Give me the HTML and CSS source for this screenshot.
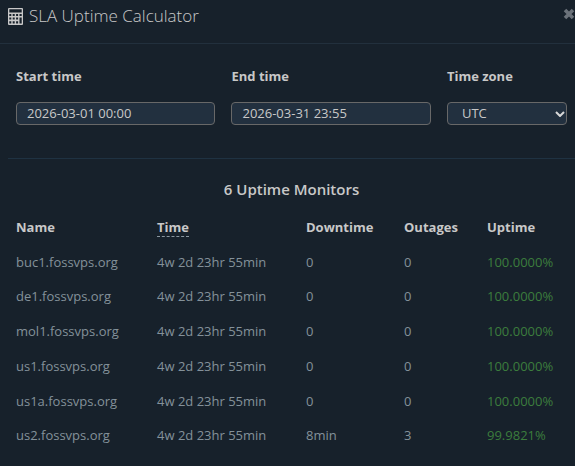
FILE: index.html
```html
<!DOCTYPE html>
<html lang="en">
<head>
<meta charset="utf-8">
<title>SLA Uptime Calculator</title>
<link rel="stylesheet" href="styles.css">
</head>
<body>
<main class="dialog">
  <header class="dialog-header">
    <svg class="calc-icon" viewBox="0 0 15 17" aria-hidden="true">
      <path fill="currentColor" fill-rule="evenodd" d="M1 0h13q1 0 1 1v15q0 1-1 1H1q-1 0-1-1V1q0-1 1-1zM1.3 1.3v3.2h12.4V1.3zM1.3 6v2h2V6zM4.7 6v2h2V6zM8.1 6v2h2V6zM11.5 6v2h2.2V6zM1.3 9.5v2h2v-2zM4.7 9.5v2h2v-2zM8.1 9.5v2h2v-2zM11.5 9.5v6h2.2v-6zM1.3 13.2v2.4h2v-2.4zM4.7 13.2v2.4h2v-2.4zM8.1 13.2v2.4h2v-2.4z"/>
    </svg>
    <h1 class="title">SLA Uptime Calculator</h1>
    <button class="close" type="button" aria-label="Close">
      <svg class="close-icon" viewBox="0 0 12 12" aria-hidden="true"><path d="M2 2l8 8M10 2l-8 8" stroke="currentColor" stroke-width="3.6"/></svg>
    </button>
  </header>
  <form class="filters">
    <div class="field">
      <label for="start">Start time</label>
      <input id="start" class="control" type="text" value="2026-03-01 00:00">
    </div>
    <div class="field">
      <label for="end">End time</label>
      <input id="end" class="control" type="text" value="2026-03-31 23:55">
    </div>
    <div class="field">
      <label for="zone">Time zone</label>
      <div class="select-wrap">
        <select id="zone" class="control select"><option>UTC</option></select>
        <svg class="chevron" viewBox="0 0 10 6" aria-hidden="true"><path d="M1 1l4 4 4-4" fill="none" stroke="currentColor" stroke-width="2"/></svg>
      </div>
    </div>
  </form>
  <section class="results">
    <h2 class="subtitle">6 Uptime Monitors</h2>
    <table class="monitors">
      <colgroup><col class="c-name"><col class="c-time"><col class="c-down"><col class="c-out"><col class="c-up"></colgroup>
      <thead>
        <tr><th>Name</th><th><span class="hint">Time</span></th><th>Downtime</th><th>Outages</th><th>Uptime</th></tr>
      </thead>
      <tbody>
        <tr><td>buc1.fossvps.org</td><td>4w 2d 23hr 55min</td><td>0</td><td>0</td><td class="good">100.0000%</td></tr>
        <tr><td>de1.fossvps.org</td><td>4w 2d 23hr 55min</td><td>0</td><td>0</td><td class="good">100.0000%</td></tr>
        <tr><td>mol1.fossvps.org</td><td>4w 2d 23hr 55min</td><td>0</td><td>0</td><td class="good">100.0000%</td></tr>
        <tr><td>us1.fossvps.org</td><td>4w 2d 23hr 55min</td><td>0</td><td>0</td><td class="good">100.0000%</td></tr>
        <tr><td>us1a.fossvps.org</td><td>4w 2d 23hr 55min</td><td>0</td><td>0</td><td class="good">100.0000%</td></tr>
        <tr><td>us2.fossvps.org</td><td>4w 2d 23hr 55min</td><td>8min</td><td>3</td><td class="good">99.9821%</td></tr>
      </tbody>
    </table>
  </section>
</main>
</body>
</html>
```
FILE: styles.css
```css
* { box-sizing: border-box; }
body {
  margin: 0;
  background: #15141f;
  color: #c8c8c8;
  font-family: "Open Sans", sans-serif;
  font-size: 13px;
  line-height: 1.44;
}
.dialog { background: #17212b; padding-bottom: 14px; }
.dialog-header {
  display: flex;
  align-items: flex-start;
  height: 44px;
  padding: 8px 0 0 8px;
  border-bottom: 1px solid #22303d;
}
.calc-icon { width: 15px; height: 17px; flex: none; color: #c8c8c8; }
.title {
  flex: 1;
  margin: 0 0 0 6px;
  font-size: 17px;
  font-weight: 300;
  line-height: 16px;
}
.close {
  flex: none;
  padding: 0;
  border: 0;
  background: none;
  color: #6b727a;
}
.close-icon { display: block; width: 12px; height: 12px; }
.filters {
  display: grid;
  grid-template-columns: 38fr 38fr 24fr;
  margin-left: 8px;
  padding: 20px 0 33px;
  border-bottom: 1px solid #1f3242;
}
.field { min-width: 0; padding: 0 8px; }
.field label {
  display: block;
  margin-bottom: 14px;
  font-weight: 700;
  line-height: 24px;
}
.control {
  display: block;
  width: 100%;
  height: 23px;
  margin: 0;
  padding: 0 10px 2px;
  border: 1px solid #686868;
  border-radius: 4px;
  background: #22303f;
  color: #c8c8c8;
  font: inherit;
  line-height: 19px;
}
.select-wrap { position: relative; }
.select { appearance: none; padding: 0 14px; }
.chevron {
  position: absolute;
  right: 2px;
  top: 9px;
  width: 10px;
  height: 6px;
  color: #d8d8d8;
  pointer-events: none;
}
.results { padding-left: 8px; }
.subtitle {
  margin: 19px 0 10px;
  font-size: 15px;
  font-weight: 600;
  line-height: 22px;
  text-align: center;
}
.monitors { width: 100%; border-collapse: collapse; table-layout: fixed; }
.monitors th, .monitors td {
  padding: 8px 0 8px 8px;
  text-align: left;
  white-space: nowrap;
}
.c-name { width: 141px; }
.c-time { width: 149px; }
.c-down { width: 98px; }
.c-out { width: 83px; }
.hint { border-bottom: 1px dashed #8a97a0; }
.monitors td { color: #84919a; }
.monitors .good { color: #3c7d3d; }
```
